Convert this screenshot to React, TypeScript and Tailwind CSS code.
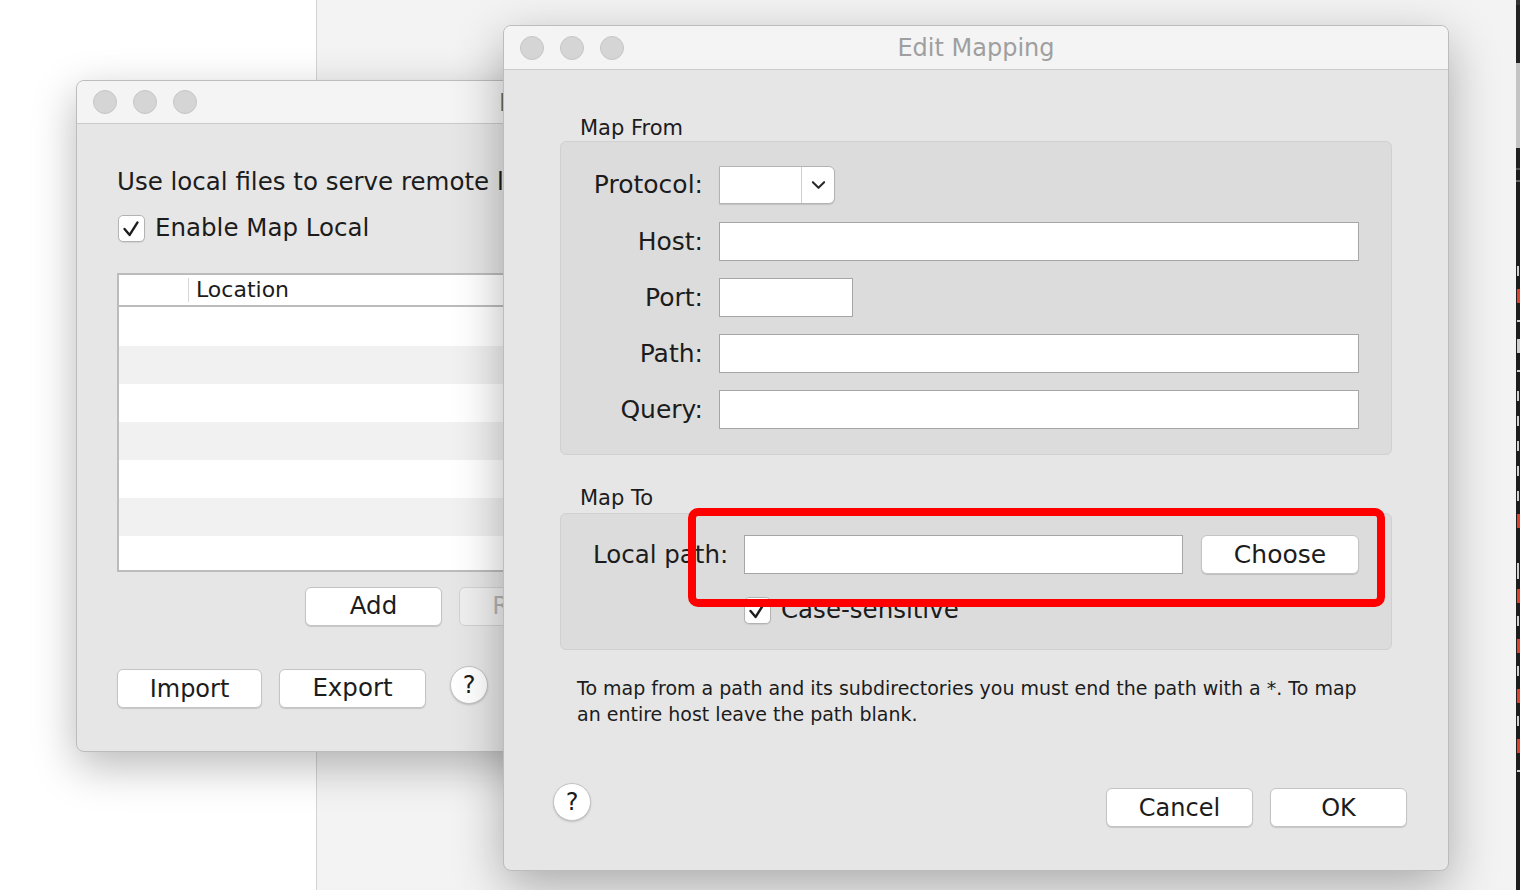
import React from "react";

function Lights() {
  return (
    <div className="flex gap-4 pl-4">
      {[0, 1, 2].map((i) => (
        <div key={i} className="w-6 h-6 rounded-full bg-[#d5d5d5] border border-[#c6c6c6]" />
      ))}
    </div>
  );
}

function Btn({ children, className = "" }: { children?: React.ReactNode; className?: string }) {
  return (
    <div
      className={
        "flex items-center justify-center bg-white border border-[#c4c4c4] rounded-[6px] shadow-[0_1px_1px_rgba(0,0,0,0.14)] leading-none text-[#1c1c1c] " +
        className
      }
    >
      {children}
    </div>
  );
}

function Help({ className = "" }: { className?: string }) {
  return (
    <div
      className={
        "w-[38px] h-[38px] rounded-full bg-white border border-[#c4c4c4] shadow-[0_1px_2px_rgba(0,0,0,0.18)] flex items-center justify-center text-[24px] leading-none text-[#1c1c1c] " +
        className
      }
    >
      ?
    </div>
  );
}

function Check() {
  return (
    <div className="w-[27px] h-[27px] shrink-0 rounded-[5px] bg-white border border-[#b3b3b3] shadow-[0_1px_1px_rgba(0,0,0,0.08)]">
      <svg viewBox="0 0 27 27" className="w-full h-full">
        <path d="M6 14 L11.5 20.5 L20 7" fill="none" stroke="#1e1e1e" strokeWidth="2.6" strokeLinecap="round" strokeLinejoin="round" />
      </svg>
    </div>
  );
}

function Field({ className = "" }: { className?: string }) {
  return <div className={"h-[39px] bg-white border border-[#a6a6a6] " + className} />;
}

function Row({ label, children, h = "h-[39px]" }: { label: string; children: React.ReactNode; h?: string }) {
  return (
    <div className={"flex items-center " + h}>
      <div className="w-[142px] shrink-0 text-right text-[25px] leading-[28px] text-[#1c1c1c] whitespace-nowrap">{label}</div>
      <div className="ml-4 flex-1 flex items-center">{children}</div>
    </div>
  );
}

// slivers of the terminal text visible at the right edge: [kind, color]
const termMarks: [string, string][] = [
  ["a", "#cfcfcf"],
  ["t", "#e0412c"],
  ["-", "#cfcfcf"],
  ["t", "#cfcfcf"],
  ["-", "#cfcfcf"],
  ["a", "#cfcfcf"],
  ["a", "#cfcfcf"],
  ["n", "#cfcfcf"],
  ["a", "#cfcfcf"],
  ["a", "#cfcfcf"],
  ["t", "#e0412c"],
  ["", "#cfcfcf"],
  ["k", "#cfcfcf"],
  ["t", "#e0412c"],
  ["n", "#cfcfcf"],
  ["t", "#e0412c"],
  ["n", "#cfcfcf"],
  ["t", "#e0412c"],
  ["n", "#cfcfcf"],
  ["t", "#e0412c"],
  ["-", "#cfcfcf"],
];

export default function App() {
  return (
    <div className="relative w-[1520px] h-[890px] overflow-hidden flex font-['DejaVu_Sans',Verdana,sans-serif]">
      {/* desktop background */}
      <div className="w-[316px] bg-white" />
      <div className="w-px bg-[#d4d4d4]" />
      <div className="flex-1 bg-[#f3f3f3]" />
      {/* terminal at the right edge */}
      <div className="w-[4px] overflow-hidden bg-[#1d1d1d] flex flex-col">
        <div className="h-[63px] shrink-0 bg-[#222] border-t-[5px] border-[#333]" />
        <div className="h-[85px] shrink-0 bg-[#c4c4c4]" />
        <div className="h-[20px] shrink-0 bg-[#202020]" />
        <div className="h-[2px] shrink-0 bg-[#555]" />
        <div className="h-[10px] shrink-0 bg-[#1d1d1d]" />
        <div className="h-[2px] shrink-0 bg-[#666]" />
        <div className="h-[76px] shrink-0" />
        {termMarks.map(([k, c], i) => (
          <div key={i} className="h-[25px] shrink-0 flex items-center pl-px">
            {k === "-" ? (
              <div className="w-[3px] h-[2px]" style={{ backgroundColor: c }} />
            ) : k === "" ? null : (
              <div
                className={k === "t" ? "w-[3px] h-[14px]" : k === "k" ? "w-[2px] h-[16px]" : "w-[2px] h-[10px]"}
                style={{ backgroundColor: c }}
              />
            )}
          </div>
        ))}
      </div>

      {/* Map Local Settings window */}
      <div className="absolute left-[76px] top-[80px] w-[720px] h-[672px] rounded-[8px] border border-[#bcbcbc] bg-[#e6e6e6] shadow-[0_14px_44px_rgba(0,0,0,0.28)] overflow-hidden flex flex-col">
        <div className="relative h-[43px] shrink-0 bg-[#f4f4f4] border-b border-[#cacaca] flex items-center">
          <Lights />
          <div className="absolute left-[422px] top-[8px] w-[6px] overflow-hidden text-[24px] leading-[28px] text-[#6a6a6a] whitespace-nowrap">M</div>
        </div>
        <div className="flex flex-col pl-[40px] pt-[44px] text-[#1c1c1c]">
          <div className="w-[387px] overflow-hidden text-[24.5px] leading-[28px] whitespace-nowrap">Use local files to serve remote locations</div>
          <div className="mt-[18px] flex items-center gap-[10px]">
            <div className="ml-px">
              <Check />
            </div>
            <span className="text-[24.5px] leading-[28px]">Enable Map Local</span>
          </div>
          <div className="mt-[31px] w-[640px] border-2 border-[#bcbcbc] bg-white flex flex-col">
            <div className="h-[32px] border-b-2 border-[#bcbcbc] flex items-center">
              <div className="w-[69px]" />
              <div className="w-px h-[24px] bg-[#d6d6d6]" />
              <span className="pl-[7px] text-[22px] leading-[24px]">Location</span>
            </div>
            <div className="h-[39px] bg-white" />
            <div className="h-[38px] bg-[#f1f1f1]" />
            <div className="h-[38px] bg-white" />
            <div className="h-[38px] bg-[#f1f1f1]" />
            <div className="h-[38px] bg-white" />
            <div className="h-[38px] bg-[#f1f1f1]" />
            <div className="h-[34px] bg-white" />
          </div>
          <div className="mt-[15px] ml-[188px] flex gap-[17px]">
            <Btn className="w-[137px] h-[39px] text-[24.5px]">Add</Btn>
            <div className="w-[166px] h-[39px] flex items-center justify-center rounded-[6px] border border-[#d2d2d2] bg-[#efefef] text-[24.5px] leading-none text-[#b4b4b4]">
              Remove
            </div>
          </div>
          <div className="mt-[43px] flex items-start">
            <Btn className="w-[145px] h-[39px] text-[24px]">Import</Btn>
            <Btn className="ml-[17px] w-[147px] h-[39px] text-[24.5px]">Export</Btn>
            <Help className="ml-[24px] -mt-[3px]" />
          </div>
        </div>
      </div>

      {/* Edit Mapping dialog */}
      <div className="absolute left-[503px] top-[25px] w-[946px] h-[846px] rounded-[8px] border border-[#bcbcbc] bg-[#e6e6e6] shadow-[0_16px_50px_rgba(0,0,0,0.3)] overflow-hidden flex flex-col text-[#1c1c1c]">
        <div className="h-[44px] shrink-0 bg-[#f4f4f4] border-b border-[#cacaca] grid grid-cols-[1fr_auto_1fr] items-center">
          <Lights />
          <span className="text-[24px] leading-[28px] text-[#9f9f9f]">Edit Mapping</span>
          <div />
        </div>
        <div className="flex-1 flex flex-col">
          <div className="mt-[46px] ml-[76px] text-[21px] leading-[24px]">Map From</div>
          <div className="mt-px mx-[56px] h-[314px] rounded-[6px] border border-[#d0d0d0] bg-[#dcdcdc] pt-[23px] pr-[32px] flex flex-col gap-[17px]">
            <Row label="Protocol:" h="h-[40px]">
              <div className="w-[116px] h-[38px] bg-white border border-[#b3b3b3] rounded-r-[6px] shadow-[0_1px_1px_rgba(0,0,0,0.12)] flex">
                <div className="w-[82px] border-r border-[#cfcfcf]" />
                <div className="flex-1 flex items-center justify-center">
                  <svg viewBox="0 0 16 10" className="w-[15px] h-[10px]">
                    <path d="M2 2 L8 8 L14 2" fill="none" stroke="#2a2a2a" strokeWidth="2.2" strokeLinecap="round" strokeLinejoin="round" />
                  </svg>
                </div>
              </div>
            </Row>
            <Row label="Host:">
              <Field className="flex-1" />
            </Row>
            <Row label="Port:">
              <Field className="w-[134px]" />
            </Row>
            <Row label="Path:">
              <Field className="flex-1" />
            </Row>
            <Row label="Query:">
              <Field className="flex-1" />
            </Row>
          </div>

          <div className="mt-[31px] ml-[76px] text-[21px] leading-[24px]">Map To</div>
          <div className="mt-[3px] mx-[56px] h-[137px] rounded-[6px] border border-[#d0d0d0] bg-[#dcdcdc] pt-[21px] flex flex-col">
            <div className="h-[39px] flex items-center pl-[32px] pr-[32px]">
              <span className="text-[24.5px] leading-[28px] whitespace-nowrap">Local path:</span>
              <Field className="ml-4 flex-1" />
              <Btn className="ml-[18px] w-[158px] h-[39px] text-[25px]">Choose</Btn>
            </div>
            <div className="mt-[22px] ml-[183px] flex items-center gap-[10px]">
              <Check />
              <span className="text-[24.5px] leading-[28px]">Case-sensitive</span>
            </div>
          </div>

          <div className="mt-[25px] ml-[73px] text-[19px] leading-[26px] whitespace-nowrap">
            To map from a path and its subdirectories you must end the path with a *. To map
            <br />
            an entire host leave the path blank.
          </div>

          <div className="mt-auto mb-[43px] flex items-end">
            <Help className="ml-[49px] mb-[6px]" />
            <Btn className="ml-auto w-[147px] h-[39px] text-[24px]">Cancel</Btn>
            <Btn className="ml-[17px] mr-[41px] w-[137px] h-[39px] text-[24px]">OK</Btn>
          </div>
        </div>
      </div>

      {/* red annotation */}
      <div className="absolute left-[688px] top-[508px] w-[697px] h-[99px] border-[8px] border-[#ff0000] rounded-[10px]" />
    </div>
  );
}
